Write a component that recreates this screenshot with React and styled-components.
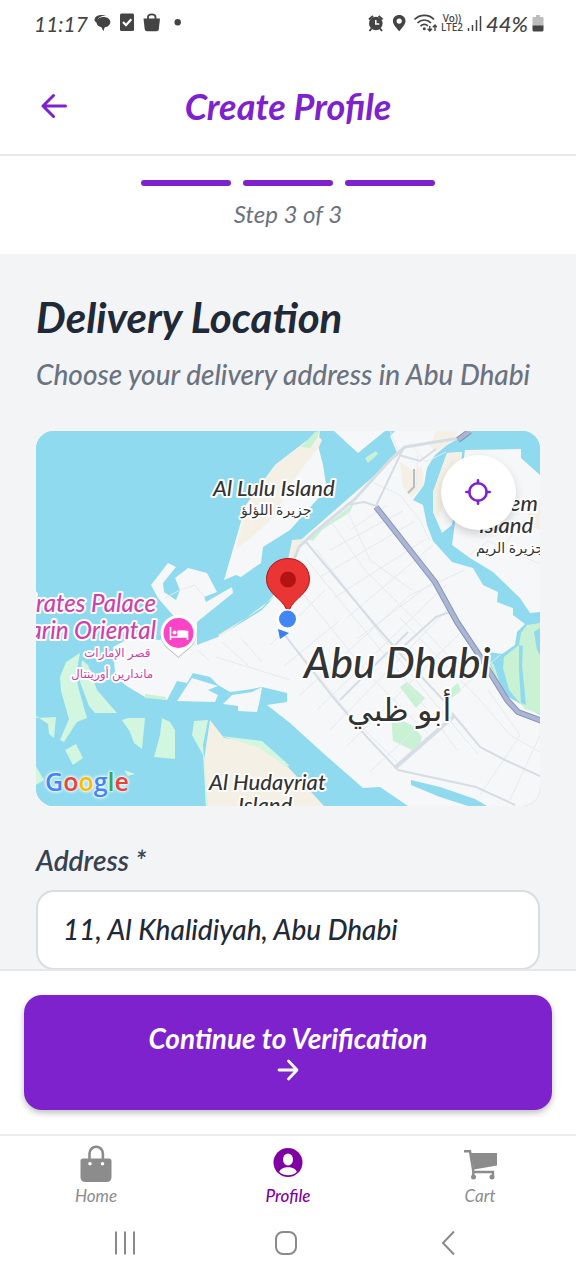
import React from "react";
import styled, { createGlobalStyle, css } from "styled-components";

const purple = "#7e22ce";
const script = `Lato, "DejaVu Sans", sans-serif`;

const GlobalStyle = createGlobalStyle`
  * { box-sizing: border-box; }
  body { margin: 0; background: #fff; font-family: ${script}; font-style: italic; }
  button, input { font: inherit; color: inherit; }
`;

const Screen = styled.div`
  display: flex;
  flex-direction: column;
  height: 100vh;
  background: #fff;
`;

const StatusBar = styled.div`
  display: flex;
  justify-content: space-between;
  align-items: center;
  flex: none;
  height: 46px;
  padding: 0 32px 0 34px;
  color: #444;
`;

const StatusGroup = styled.div`
  display: flex;
  align-items: center;
  gap: ${(p) => p.$gap}px;
  svg { display: block; }
`;

const Clock = styled.span`
  font-size: 21px;
`;

const Battery = styled.span`
  font-size: 22px;
  font-weight: 500;
`;

const Network = styled.span`
  display: flex;
  flex-direction: column;
  font: 500 10px/9px "Noto Sans", sans-serif;
  text-align: center;
`;

const Header = styled.header`
  display: grid;
  grid-template-columns: 36px 1fr 36px;
  align-items: center;
  flex: none;
  height: 110px;
  padding: 12px 36px 0;
  border-bottom: 2px solid #e8eaed;
`;

const IconButton = styled.button`
  display: grid;
  place-items: center;
  width: 36px;
  height: 36px;
  padding: 0;
  border: 0;
  background: none;
  color: ${purple};
`;

const Title = styled.h1`
  margin: 0;
  font-size: 36px;
  line-height: 40px;
  font-weight: 700;
  text-align: center;
  color: ${purple};
`;

const Steps = styled.div`
  display: flex;
  flex-direction: column;
  align-items: center;
  flex: none;
  gap: 12px;
  height: 98px;
  padding-top: 24px;
`;

const Bars = styled.div`
  display: flex;
  gap: 12px;
`;

const Bar = styled.span`
  width: 90px;
  height: 6px;
  border-radius: 3px;
  background: ${purple};
`;

const StepText = styled.span`
  font-size: 24px;
  line-height: 32px;
  color: #6b7280;
`;

const Content = styled.main`
  flex: 1;
  min-height: 0;
  padding: 36px 36px 0;
  overflow-y: auto;
  scrollbar-width: none;
  background: #f3f4f6;
`;

const Heading = styled.h2`
  margin: 0;
  font-size: 42px;
  line-height: 54px;
  font-weight: 700;
  color: #1f2937;
`;

const Lead = styled.p`
  margin: 10px 0 36px;
  font-size: 28px;
  line-height: 41px;
  font-weight: 500;
  color: #6b7280;
`;

const MapCard = styled.section`
  position: relative;
  height: 375px;
  border-radius: 18px;
  overflow: hidden;
  background: #8fdaee;
`;

const MapArt = styled.svg`
  display: block;
  width: 100%;
  height: 100%;
`;

const MapText = styled.text`
  font-family: ${script};
  font-style: ${(p) => (p.$upright ? "normal" : "italic")};
  font-size: ${(p) => p.$size}px;
  font-weight: ${(p) => (p.$upright ? 400 : 500)};
  fill: ${(p) => p.$color || "#333"};
  stroke: #fff;
  stroke-width: 4px;
  stroke-linejoin: round;
  paint-order: stroke;
`;

const Locate = styled.button`
  position: absolute;
  top: 24px;
  right: 24px;
  display: grid;
  place-items: center;
  width: 75px;
  height: 75px;
  padding: 0;
  border: 0;
  border-radius: 50%;
  background: #fff;
  color: ${purple};
  box-shadow: 0 4px 8px rgba(0, 0, 0, 0.16);
`;

const Google = styled.span`
  position: absolute;
  left: 9px;
  bottom: 9px;
  font: 600 25px/32px "Open Sans", sans-serif;
  text-shadow: 0 0 2px #fff, 0 0 3px #fff, 0 0 4px #fff;
`;

const Tint = styled.span`
  color: ${(p) => p.$c};
`;

const Field = styled.div`
  display: flex;
  flex-direction: column;
  gap: 12px;
  padding-top: 36px;
`;

const Label = styled.label`
  font-size: 28px;
  line-height: 36px;
  font-weight: 600;
  color: #374151;
`;

const TextBox = styled.input`
  width: 100%;
  height: 80px;
  padding: 0 25px 2px;
  border: 2px solid #d9dce1;
  border-radius: 18px;
  background: #fff;
  font-size: 28px;
  font-weight: 500;
  color: #1f2937;
`;

const Footer = styled.footer`
  flex: none;
  padding: 24px;
  border-top: 2px solid #e5e7eb;
`;

const Primary = styled.button`
  display: flex;
  flex-direction: column;
  align-items: center;
  justify-content: center;
  gap: 4px;
  width: 100%;
  height: 115px;
  padding: 0 0 4px;
  border: 0;
  border-radius: 18px;
  background: ${purple};
  font-size: 28px;
  line-height: 34px;
  font-weight: 700;
  color: #fff;
  box-shadow: 0 3px 6px rgba(0, 0, 0, 0.25);
`;

const Tabs = styled.nav`
  display: grid;
  grid-template-columns: repeat(3, 1fr);
  flex: none;
  height: 78px;
  border-top: 2px solid #ededed;
`;

const Tab = styled.a`
  display: flex;
  flex-direction: column;
  align-items: center;
  padding-top: 8px;
  font-size: 17px;
  line-height: 24px;
  text-decoration: none;
  color: #8c8c8c;
  ${(p) => p.$active && css`color: #8100a6; font-weight: 500;`}
`;

const SystemBar = styled.div`
  display: flex;
  align-items: center;
  justify-content: space-between;
  flex: none;
  height: 68px;
  padding: 0 110px 6px 107px;
`;

const SystemButton = styled(IconButton)`
  color: #8a8a8a;
`;

function ArrowLeft() {
  return (
    <svg width="26" height="26" viewBox="0 0 26 26" fill="none" stroke="currentColor" strokeWidth="3" strokeLinecap="round" strokeLinejoin="round">
      <path d="M24.500 13H2M12.500 2.500 2 13l10.500 10.500" />
    </svg>
  );
}

function ArrowRight() {
  return (
    <svg width="22" height="22" viewBox="0 0 22 22" fill="none" stroke="currentColor" strokeWidth="2.800" strokeLinecap="round" strokeLinejoin="round">
      <path d="M2 11h18M11.500 2l8.500 9-8.500 9" />
    </svg>
  );
}

function LeftStatusIcons() {
  return (
    <svg width="90" height="20" viewBox="93 14 90 20" fill="#444">
      <path d="M93.500 21c0-4 5-6 12-4.500-6 0-9 2-9.500 7-1.500-.3-2.500-1.300-2.500-2.500z" />
      <path d="M102.500 18c4 0 6.800 2.200 6.800 5.200 0 2.600-2.300 4.600-5.600 5l-1.400 4-1.800-4c-3.200-.6-5-2.500-5-5 0-3 3-5.200 7-5.200z" />
      <rect x="119" y="14.500" width="14" height="17.500" rx="1.500" />
      <path d="m122 23 3 3.200 5.300-6" fill="none" stroke="#fff" strokeWidth="2.200" />
      <path d="M142.500 19.500h16.500l-1.200 10.500c-.2 1.500-1 2.200-2.300 2.200h-9.500c-1.300 0-2-.7-2.300-2.200z" />
      <path d="M147 20v-2c0-3.500 7.500-3.500 7.500 0v2" fill="none" stroke="#444" strokeWidth="1.800" />
      <circle cx="176.700" cy="23.300" r="3.200" />
    </svg>
  );
}

function AlarmPinWifi() {
  return (
    <svg width="70" height="20" viewBox="367 13 70 20" fill="#444">
      <circle cx="375.800" cy="23.500" r="6.800" />
      <path d="m369 19.500 4-3.500M382.600 19.500l-4-3.500M371.500 28.500l-2 2.500M380 28.500l2 2.500" stroke="#444" strokeWidth="2" fill="none" />
      <path d="M375.800 20v4h3.500" fill="none" stroke="#fff" strokeWidth="1.500" />
      <path fillRule="evenodd" d="M399.200 15c3.700 0 6.300 2.600 6.300 6 0 3.600-3.200 6.400-6.300 10.300-3.100-3.900-6.300-6.700-6.300-10.300 0-3.400 2.600-6 6.300-6zm0 3.500a2.600 2.600 0 1 0 0 5.200 2.600 2.600 0 0 0 0-5.200z" />
      <g fill="none" stroke="#444" strokeWidth="1.700">
        <path d="M414.500 19.500c5.500-5.500 14.500-5.500 19.500 0M417.500 22.800c4-3.700 9.500-3.700 13.500 0M420.500 26c2.500-2.200 5-2.200 7.500-.2" />
        <path d="M429.800 26v5M427.600 28.700l2.200 2.300 2.200-2.300M435 31v-6M432.800 27.300l2.200-2.300 2 2.300" strokeWidth="1.400" />
      </g>
      <circle cx="424.300" cy="28.800" r="1.500" />
    </svg>
  );
}

function Signal() {
  return (
    <svg width="15" height="17" viewBox="0 0 15 17" stroke="#444" strokeWidth="1.500" fill="none">
      <path d="M1.500 13v3M5.500 10v6M9.500 5v11M13.500 1v15" />
    </svg>
  );
}

function BatteryIcon() {
  return (
    <svg width="12" height="17" viewBox="0 0 12 17">
      <path d="M4 0h4v2h2.500q1 0 1 1v8H.5V3q0-1 1-1H4z" fill="#bdbdbd" />
      <path d="M.5 10.500h11V15q0 1.500-1.500 1.500H2Q.5 16.500.5 15z" fill="#444" />
    </svg>
  );
}

function Bag() {
  return (
    <svg width="32" height="40" viewBox="0 0 32 40">
      <path d="M9.500 15V9.500a6.700 6.700 0 0 1 13.400 0V15" fill="none" stroke="currentColor" strokeWidth="2.600" />
      <path fill="currentColor" fillRule="evenodd" d="M3 14.500h26a2.500 2.500 0 0 1 2.500 2.500v16q0 5-5 5H5.500Q.5 38 .5 33V17A2.500 2.500 0 0 1 3 14.500zM10 18a1.800 1.800 0 1 0 0 3.600 1.800 1.800 0 0 0 0-3.600zm12.500 0a1.800 1.800 0 1 0 0 3.600 1.800 1.800 0 0 0 0-3.600z" />
    </svg>
  );
}

function Person() {
  return (
    <svg width="32" height="40" viewBox="0 0 32 40">
      <circle cx="16" cy="18.500" r="14.500" fill="currentColor" />
      <ellipse cx="16" cy="15.500" rx="5" ry="6" fill="#fff" />
      <path d="M7.300 28c1-6.500 16.500-6.500 17.500 0-4.500 4.300-13 4.300-17.500 0z" fill="#fff" />
    </svg>
  );
}

function Cart() {
  return (
    <svg width="34" height="40" viewBox="0 0 34 40" fill="currentColor">
      <path d="M8 9h26v12.500L11 25.500z" />
      <path d="M1 7.300h6l3.300 20v4M9.500 28h20.500v4" fill="none" stroke="currentColor" strokeWidth="2.400" />
      <circle cx="10.500" cy="33" r="2.500" />
      <circle cx="29" cy="33" r="2.500" />
    </svg>
  );
}

function MapDrawing() {
  return (
    <MapArt viewBox="36 431 504 375" preserveAspectRatio="xMidYMid slice" role="img" aria-label="Map of Abu Dhabi">
      <rect x="36" y="431" width="504" height="375" fill="#8fdaee" />

      <g fill="#f6f7f8">
        <path d="M334 431H385L358 453z" />
        <path d="M390 436L395 431H472L447 445 435 455 427 468 424 485 413 500 423 505 427 525 433 541 452 562 473 568 483 585 498 592 497 602 513 608 513 615 525 624 517 632 515 645 502 654 482 651 490 665 505 695 540 715V806H408L380 787 363 788 323 753 290 723 267 705 287 702V693L262 687 252 689 238 691 230 692 218 685 210 677 193 673 187 683 177 681 167 700 145 697 125 685 115 673 113 647 130 638 160 640 197 645 218 637 262 610 285 585 288 560 292 548 303 538 398 455z" />
        <path d="M168 563L176 567 163 583 164 592 176 600 180 590 175 578 188 568 207 573 217 592 204 597 206 602 232 587 233 593 197 622 197 645 160 640 177 620 158 598 151 585z" />
        <path d="M320 431L318 445 323 465 326 484 322 494 290 530 263 547 261 563 255 567 241 577 236 575 224 580 240 525 246 505 275 465 309 439z" />
        <path d="M447 453L462 452 460 475 454 492 453 518 452 525 442 533 433 512 433 492z" />
        <path d="M465 450L521 449V458L540 475V612L530 613 520 598 493 572 470 558 452 545 455 522 459 495z" />
      </g>

      <g fill="#f5f0e5">
        <path d="M318 436L322 440 319 447 294 479 273 518 248 540 236 549 246 505 275 465 309 439z" />
        <path d="M400 462L414 471 422 466 424 485 411 498 403 487z" />
        <path d="M447 453L462 452 452 480 445 498 438 520 433 512 433 492z" />
        <path d="M436 431H458L450 443 435 452 430 446z" />
        <path d="M528 505L540 498V530L528 525z" />
        <path d="M210 720L224 738 262 743 288 767 324 806H206L204 760z" />
        <path d="M292 540L304 539 296 555 292 570 284 590 220 637 218 635 262 608 283 585 288 560z" />
      </g>
      <path d="M305 540L298 556 294 572 287 592 263 611 225 638 500 700 470 600z" fill="#f6f7f8" />

      <g fill="#c9f1d4">
        <path d="M301 447L315 432 320 431 317 438 310 448zM307 539L338 516 354 503 350 512 322 530 313 541z" />
        <path d="M365 458L376 451 378 454 368 463z" />
        <path d="M145 694L166 697 166 700 145 698z" />
        <path d="M400 687L407 682 425 698 416 708zM447 692L458 683 461 691 449 700zM391 715L413 726 422 737 420 744 412 750 393 741z" />
        <path d="M540 623L527 625 521 633 519 645 504 657 503 668 509 690 525 709 540 714zM489 660L494 665 502 690 513 706 505 696 494 672z" />
      </g>
      <g fill="#d2f6df">
        <path d="M80 653L66 662 60 677 61 691 69 719 60 740 64 742 77 722 87 718 79 690 76 675zM82 660L80 682 89 706 95 713H117L97 690 88 665z" />
        <path d="M122 720L128 718H145L142 749 134 743 130 732zM162 718L170 722 175 730V759L154 757 160 735z" />
        <path d="M65 750L76 744 83 758 73 765zM36 718L56 717 54 738 49 734 48 724 36 716zM194 721L208 720 203 745 208 806H206L203 755 192 735zM36 766L44 780 36 785zM124 770L135 774 128 776z" />
        <path d="M221 736L262 741 290 766 285 766 260 748z" />
      </g>

      <g fill="#f6f7f8">
        <path d="M192 678L218 686 208 690 218 695 215 702 177 701z" />
        <path d="M232 695L252 692 262 687 260 699 257 712 238 711 238 706 223 704z" />
      </g>

      <g fill="#8fdaee">
        <path d="M411 780L440 787 475 799 487 806H468L440 797 411 785z" />
        <path d="M519 645L523 646 522 665 526 705 521 703 519 670zM540 628L534 632 537 650 540 655z" />
      </g>

      <g fill="none" stroke="#e6eaef" strokeWidth="1">
        <path d="M346 508L370 560 412 590M330 520L365 570 420 625 470 680M316 549L408 671 478 754M306 559L398 671 458 751M300 590L370 676 428 734M284 634L350 715 400 765" />
        <path d="M374 483L400 495 420 520 430 541M350 530L387 505M330 550L403 511M320 577L415 521M334 598L426 539M348 617L433 545M357 639L436 580M300 695L410 595 465 570M317 710L447 584M330 730L447 610M346 747L461 632M370 772L420 725" />
        <path d="M284 666L339 621M270 645L325 590M240 637L262 662M222 642L248 665M216 657L290 680M400 618L480 700 510 735 540 752M488 690L520 735 480 795M510 800L540 735M448 700L500 655" />
        <path d="M470 555L488 541 540 564M500 550L524 520M453 458L448 478M410 443L426 462 446 452M418 455L416 490M400 455L390 431M165 598L180 590 195 585 205 598M197 650L209 660" />
      </g>
      <g fill="none" stroke="#d6dde5" strokeWidth="2">
        <path d="M460 438L405 447 391 459 355 499 315 532 299 547 293 562" strokeWidth="3" />
        <path d="M403 449L376 506 364 502 346 505M399 455L420 461 436 449M306 542L326 566 376 626 404 658 446 703M284 634L332 696 366 736 398 770 476 787 515 805M405 645L436 617 450 612M340 700L408 632M452 713L480 747 505 760 540 776" />
        <path d="M396 767L454 716" strokeWidth="4" />
        <path d="M414 469V487L408 493" stroke="#b9bdc2" />
      </g>

      <g fill="none" strokeLinejoin="round">
        <path d="M376 507L435 582 457 622 481 658 507 700 518 712 542 721M458 440L470 431" stroke="#8795b8" strokeWidth="6" />
        <path d="M376 507L435 582 457 622 481 658 507 700 518 712 542 721M458 440L470 431" stroke="#aab6d3" strokeWidth="4" />
      </g>

      <MapText x="213" y="496" $size="22">Al Lulu Island</MapText>
      <MapText x="241" y="515" $size="14" $upright>جزيرة اللؤلؤ</MapText>
      <MapText x="463" y="511" $size="22">Al Reem</MapText>
      <MapText x="479" y="533" $size="22">Island</MapText>
      <MapText x="476" y="553" $size="14" $upright>جزيرة الريم</MapText>
      <MapText x="156" y="612" $size="24" $color="#cf3fae" textAnchor="end">Emirates Palace</MapText>
      <MapText x="156" y="639" $size="24" $color="#cf3fae" textAnchor="end">Mandarin Oriental</MapText>
      <MapText x="84" y="657" $size="12" $color="#cf3fae" $upright>قصر الإمارات</MapText>
      <MapText x="71" y="678" $size="12" $color="#cf3fae" $upright>ماندارين أورينتال</MapText>
      <MapText x="304" y="678" $size="42">Abu Dhabi</MapText>
      <MapText x="347" y="721" $size="32" $upright>أبو ظبي</MapText>
      <MapText x="209" y="790" $size="22">Al Hudayriat</MapText>
      <MapText x="238" y="813" $size="22">Island</MapText>

      <g>
        <path d="M178.500 616c10 0 18 8 18 18 0 12-10 16-18 24-8-8-18-12-18-24 0-10 8-18 18-18z" fill="#777" opacity=".5" />
        <path d="M178.500 615c10 0 18 8 18 18 0 12-10 16-18 24-8-8-18-12-18-24 0-10 8-18 18-18z" fill="#fff" />
        <circle cx="178.500" cy="633" r="15" fill="#fb43c8" />
        <path d="M170.500 627v13M170.500 637h17M187.500 640v-8.500h-9.500v5.500" fill="none" stroke="#fff" strokeWidth="1.600" />
        <path d="M178 630.500h7q2.500 0 2.500 2.500v4h-9.500z" fill="#fff" />
        <circle cx="174.500" cy="632.500" r="2" fill="#fff" />
      </g>
      <path d="M278 629l11 4-9 6z" fill="#397eed" />
      <circle cx="287.500" cy="619" r="11" fill="#fff" />
      <path d="M288 558.500c12.500 0 21.500 9 21.500 21 0 14-16 19-20 30h-3c-4-11-20-16-20-30 0-12 9-21 21.500-21z" fill="#ea3535" stroke="#b31412" />
      <circle cx="288" cy="579.500" r="8" fill="#b31412" />
      <circle cx="287.500" cy="619" r="10" fill="#fff" />
      <circle cx="287.500" cy="619" r="8.500" fill="#4285f4" />
    </MapArt>
  );
}

export default function App() {
  return (
    <Screen>
      <GlobalStyle />
      <StatusBar>
        <StatusGroup $gap={6}>
          <Clock>11:17</Clock>
          <LeftStatusIcons />
        </StatusGroup>
        <StatusGroup $gap={4}>
          <AlarmPinWifi />
          <Network><span>Vo))</span><span>LTE2</span></Network>
          <Signal />
          <Battery>44%</Battery>
          <BatteryIcon />
        </StatusGroup>
      </StatusBar>

      <Header>
        <IconButton aria-label="Back"><ArrowLeft /></IconButton>
        <Title>Create Profile</Title>
      </Header>

      <Steps>
        <Bars><Bar /><Bar /><Bar /></Bars>
        <StepText>Step 3 of 3</StepText>
      </Steps>

      <Content>
        <Heading>Delivery Location</Heading>
        <Lead>Choose your delivery address in Abu Dhabi</Lead>
        <MapCard>
          <MapDrawing />
          <Google>
            <Tint $c="#4285f4">G</Tint><Tint $c="#ea4335">o</Tint><Tint $c="#fbbc04">o</Tint><Tint $c="#4285f4">g</Tint><Tint $c="#34a853">l</Tint><Tint $c="#ea4335">e</Tint>
          </Google>
          <Locate aria-label="Use my location">
            <svg width="28" height="28" viewBox="0 0 28 28" fill="none" stroke="currentColor" strokeWidth="2.600" strokeLinecap="round">
              <circle cx="13" cy="13" r="8.700" />
              <path d="M13 1.300v3M13 21.700v3M1.300 13h3M21.700 13h3" />
            </svg>
          </Locate>
        </MapCard>
        <Field>
          <Label htmlFor="address">Address *</Label>
          <TextBox id="address" type="text" defaultValue="11, Al Khalidiyah, Abu Dhabi" />
        </Field>
      </Content>

      <Footer>
        <Primary>
          Continue to Verification
          <ArrowRight />
        </Primary>
      </Footer>

      <Tabs>
        <Tab href="#home"><Bag />Home</Tab>
        <Tab href="#profile" $active><Person />Profile</Tab>
        <Tab href="#cart"><Cart />Cart</Tab>
      </Tabs>

      <SystemBar>
        <SystemButton aria-label="Recent apps">
          <svg width="24" height="26" viewBox="0 0 24 26" fill="none" stroke="currentColor" strokeWidth="2">
            <path d="M3 1.500v23M12 1.500v23M21 1.500v23" />
          </svg>
        </SystemButton>
        <SystemButton aria-label="Home screen">
          <svg width="24" height="26" viewBox="0 0 24 26" fill="none" stroke="currentColor" strokeWidth="2">
            <rect x="1" y="2" width="20" height="22" rx="7" />
          </svg>
        </SystemButton>
        <SystemButton aria-label="Previous screen">
          <svg width="24" height="26" viewBox="0 0 24 26" fill="none" stroke="currentColor" strokeWidth="2">
            <path d="M18 1.500 7 13l11 11.500" />
          </svg>
        </SystemButton>
      </SystemBar>
    </Screen>
  );
}
